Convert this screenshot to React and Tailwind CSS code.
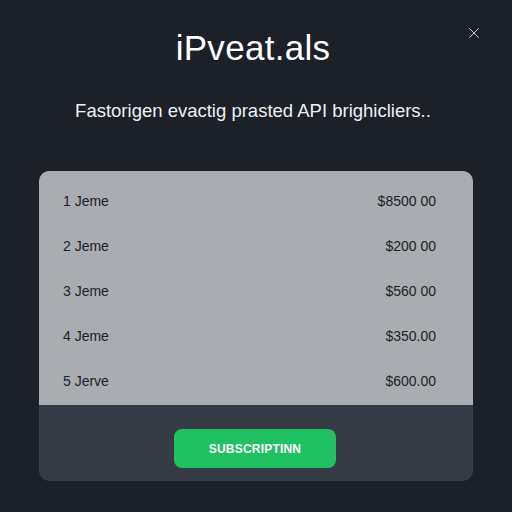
import { X } from "lucide-react";

const rows = [
  { label: "1 Jeme", price: "$8500 00" },
  { label: "2 Jeme", price: "$200 00" },
  { label: "3 Jeme", price: "$560 00" },
  { label: "4 Jeme", price: "$350.00" },
  { label: "5 Jerve", price: "$600.00" },
];

export default function App() {
  return (
    <div className="relative w-[512px] h-[512px] bg-[#1b2029] font-['Liberation_Sans',Arial,sans-serif] flex flex-col items-center">
      <button className="absolute top-[24px] right-[29px] text-[#c9ced6]">
        <X size={18} strokeWidth={1.3} />
      </button>

      <h1 className="mt-[27px] text-[35px] leading-[42px] text-white tracking-[0.3px] -translate-x-[3px]">
        iPveat.als
      </h1>
      <p className="mt-[30px] text-[18.5px] leading-[24px] text-[#eef0f3] -translate-x-[3px]">
        Fastorigen evactig prasted API brighicliers..
      </p>

      <div className="mt-[48px] w-[434px] rounded-[10px] overflow-hidden bg-[#343b44]">
        <div className="bg-[#a9adb1] pt-[20px] pb-[14px] px-[24px] flex flex-col gap-[25px] text-[14px] leading-[20px] text-[#1d2126]">
          {rows.map((r) => (
            <div key={r.label} className="flex justify-between pr-[13px]">
              <span>{r.label}</span>
              <span>{r.price}</span>
            </div>
          ))}
        </div>
        <div className="h-[76px] pt-[24px] flex justify-center">
          <button className="w-[162px] h-[39px] rounded-[8px] bg-[#20c161] text-white text-[12px] font-bold tracking-[0.2px] -translate-x-[1px]">
            SUBSCRIPTINN
          </button>
        </div>
      </div>
    </div>
  );
}
